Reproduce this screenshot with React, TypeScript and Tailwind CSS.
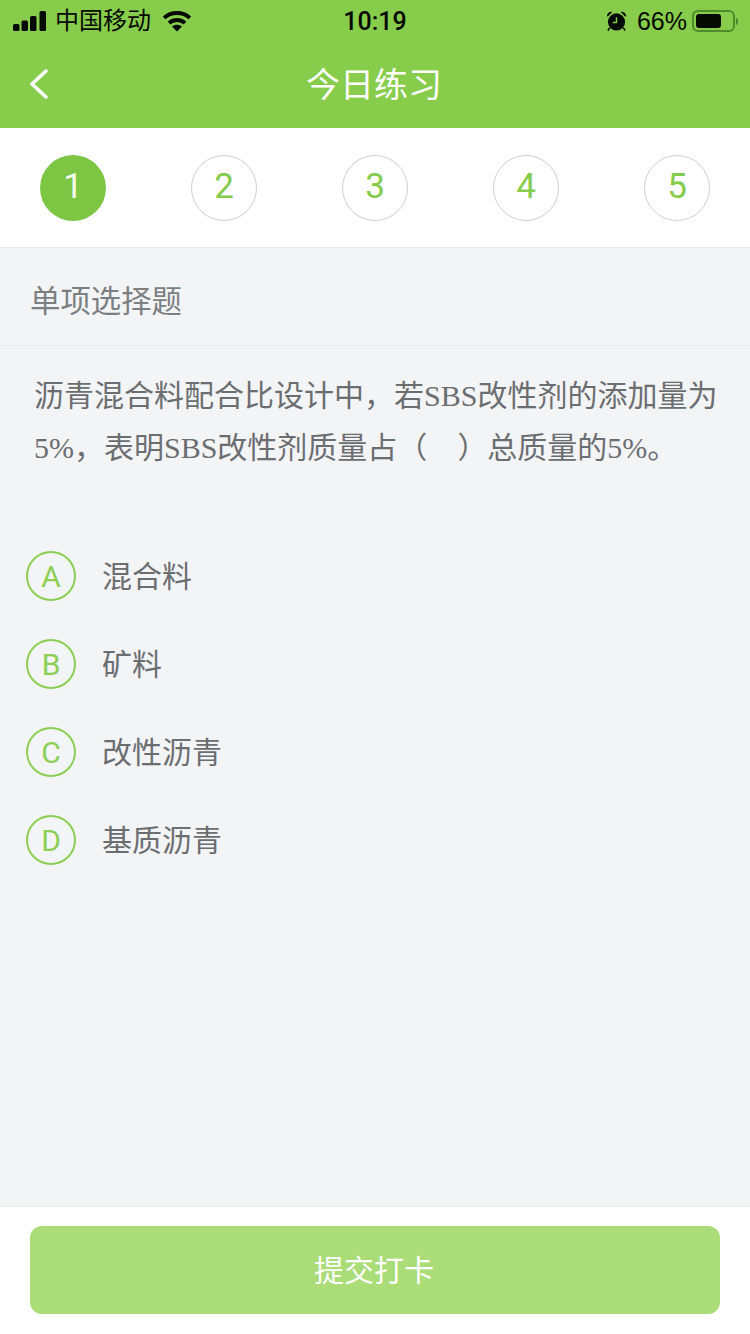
const steps = [1, 2, 3, 4, 5];

const options = [
  { key: 'A', label: '混合料' },
  { key: 'B', label: '矿料' },
  { key: 'C', label: '改性沥青' },
  { key: 'D', label: '基质沥青' },
];

const sans = "font-['Liberation_Sans','Noto_Sans_CJK_SC',sans-serif]";

const SignalIcon = () => (
  <svg width="34" height="20" viewBox="0 0 34 20" fill="#050a02">
    <rect x="0" y="13" width="6.5" height="7" rx="1.5" />
    <rect x="8.5" y="9.5" width="6.5" height="10.5" rx="1.5" />
    <rect x="17" y="5" width="6.5" height="15" rx="1.5" />
    <rect x="26.5" y="0" width="6.5" height="20" rx="1.5" />
  </svg>
);

const WifiIcon = () => (
  <svg width="30" height="21" viewBox="0 0 30 22" fill="none" stroke="#050a02" strokeWidth="4">
    <path d="M1.5 7.2C9 0.4 21 0.4 28.5 7.2" />
    <path d="M6.6 12.6C11.4 8.4 18.6 8.4 23.4 12.6" />
    <path d="M15 21.5L9.8 16.2C12.8 13.8 17.2 13.8 20.2 16.2Z" fill="#050a02" stroke="none" />
  </svg>
);

const AlarmIcon = () => (
  <svg width="21" height="22" viewBox="0 0 22 22" fill="#050a02">
    <circle cx="11" cy="12" r="9" />
    <path d="M1 5.5C1.5 2.5 4 1 6.5 1.5L1.8 6.5Z" />
    <path d="M21 5.5C20.5 2.5 18 1 15.5 1.5L20.2 6.5Z" />
    <path d="M4 18L2 21M18 18L20 21" stroke="#050a02" strokeWidth="1.6" />
    <path d="M11 7V12.5H7" stroke="#87cc4b" strokeWidth="1.5" fill="none" />
  </svg>
);

const BatteryIcon = () => (
  <div className="flex items-center gap-[1px]">
    <div className="w-[43px] h-[22px] rounded-[6px] border-2 border-[#4f8a2b] p-[2px]">
      <div className="w-[25px] h-full rounded-[3px] bg-[#050a02]" />
    </div>
    <div className="w-[2px] h-[7px] rounded-r-full bg-[#4f8a2b]" />
  </div>
);

const App = () => {
  return (
    <div className={`w-[750px] h-[1334px] flex flex-col bg-[#f3f4f6] ${sans}`}>
      <header className="bg-[#87cc4b] h-[128px] shrink-0">
        <div className="h-[42px] pl-[13px] pr-[12px] flex items-center justify-between relative">
          <div className="flex items-center">
            <SignalIcon />
            <span className="ml-[8px] text-[24px] text-[#050a02] leading-none">中国移动</span>
            <span className="ml-[11px]"><WifiIcon /></span>
          </div>
          <span className="absolute left-0 right-0 text-center text-[25px] font-['Roboto'] font-medium text-[#050a02] leading-none">10:19</span>
          <div className="flex items-center">
            <AlarmIcon />
            <span className="ml-[10px] mr-[5px] text-[25px] text-[#050a02] leading-none">66%</span>
            <BatteryIcon />
          </div>
        </div>
        <div className="h-[86px] flex items-center justify-center relative pr-[2px]">
          <svg className="absolute left-[28px] top-[26px]" width="22" height="32" viewBox="0 0 22 32" fill="none" stroke="white" strokeWidth="3.6" strokeLinecap="round" strokeLinejoin="round">
            <path d="M18 3L4 16L18 29" />
          </svg>
          <h1 className="text-[34px] text-white font-normal leading-none">今日练习</h1>
        </div>
      </header>

      <nav className="h-[120px] shrink-0 bg-white border-b border-[#e8e9eb] px-[40px] flex items-center justify-between">
        {steps.map((n) => (
          <div
            key={n}
            className={
              n === 1
                ? "w-[66px] h-[66px] rounded-full bg-[#7cc644] text-[#f4fbee] flex items-center justify-center text-[35px] font-['Roboto']"
                : "w-[66px] h-[66px] rounded-full border border-[#cfcfcf] text-[#85cb4e] flex items-center justify-center text-[35px] font-['Roboto']"
            }
          >
            {n}
          </div>
        ))}
      </nav>

      <main className="flex-1 min-h-0">
        <div className="h-[98px] border-b border-[#e9eaec] pl-[30px] pt-[10px] flex items-center text-[30.4px] text-[#7c7f82]">
          单项选择题
        </div>
        <p className="pt-[24px] pl-[34px] text-[30px] leading-[52px] text-[#6b6e71] font-['Liberation_Serif','Noto_Sans_CJK_SC',serif]">
          沥青混合料配合比设计中，若SBS改性剂的添加量为
          <br />
          5%，表明SBS改性剂质量占（<span className="inline-block w-[30px]" />）总质量的5%。
        </p>
        <ul className="mt-[77px] pl-[26px] flex flex-col gap-[38px]">
          {options.map((o) => (
            <li key={o.key} className="flex items-center h-[50px]">
              <span className="w-[50px] h-[50px] rounded-full border-2 border-[#8ccf55] text-[#8ccf55] flex items-center justify-center text-[30px] font-['Roboto']">
                {o.key}
              </span>
              <span className="ml-[26px] text-[30px] text-[#6b6e71]">{o.label}</span>
            </li>
          ))}
        </ul>
      </main>

      <footer className="h-[128px] shrink-0 bg-white border-t border-[#e8e9eb] px-[30px] pt-[19px]">
        <button className="w-full h-[88px] rounded-[12px] bg-[#aadc78] text-white text-[30px] pr-[2px]">提交打卡</button>
      </footer>
    </div>
  );
};

export default App;
